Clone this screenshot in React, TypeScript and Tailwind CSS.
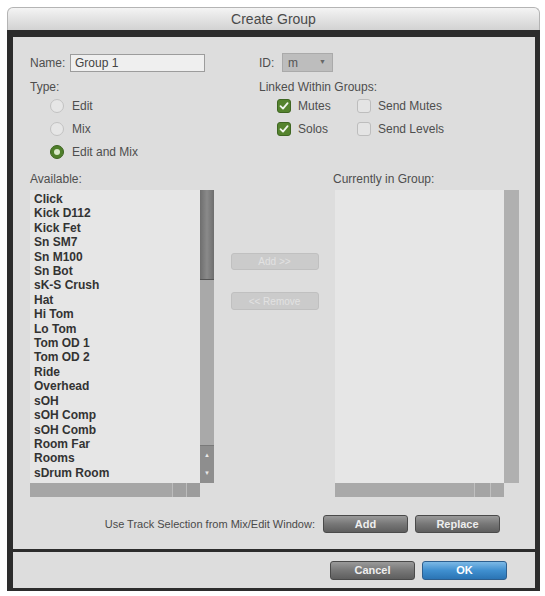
import React from "react";

const items = [
  "Click",
  "Kick D112",
  "Kick Fet",
  "Sn SM7",
  "Sn M100",
  "Sn Bot",
  "sK-S Crush",
  "Hat",
  "Hi Tom",
  "Lo Tom",
  "Tom OD 1",
  "Tom OD 2",
  "Ride",
  "Overhead",
  "sOH",
  "sOH Comp",
  "sOH Comb",
  "Room Far",
  "Rooms",
  "sDrum Room",
];

function Radio({ on, label }: { on?: boolean; label: string }) {
  return (
    <div className="flex items-center h-[23px] pl-[20px]">
      {on ? (
        <div className="w-[14px] h-[14px] rounded-full bg-[#4f7f2a] border border-[#3d6420] flex items-center justify-center">
          <div className="w-[6px] h-[6px] rounded-full bg-[#d8e8c8]" />
        </div>
      ) : (
        <div className="w-[14px] h-[14px] rounded-full bg-[#e6e6e6] border border-[#c2c2c2]" />
      )}
      <span className="ml-[8px] text-[12px] text-[#4e4e4e]">{label}</span>
    </div>
  );
}

function Check({ on, label }: { on?: boolean; label: string }) {
  return (
    <div className="flex items-center">
      {on ? (
        <div className="w-[14px] h-[14px] rounded-[3px] bg-[#55832e] border border-[#3f6622] flex items-center justify-center">
          <svg width="10" height="10" viewBox="0 0 10 10">
            <path d="M1.5 5.2 L4 7.6 L8.6 2.2" stroke="#f2f6ee" strokeWidth="1.8" fill="none" strokeLinecap="round" strokeLinejoin="round" />
          </svg>
        </div>
      ) : (
        <div className="w-[14px] h-[14px] rounded-[3px] bg-[#e4e4e4] border border-[#bdbdbd]" />
      )}
      <span className="ml-[7px] text-[12px] text-[#4e4e4e]">{label}</span>
    </div>
  );
}

function GrayButton({ label, w, h }: { label: string; w: string; h: string }) {
  return (
    <div
      className={`${w} ${h} rounded-[3px] border border-[#4a4a4a] bg-gradient-to-b from-[#9a9a9a] via-[#777777] to-[#5e5e5e] flex items-center justify-center text-[11px] font-bold text-[#eeeeee]`}
    >
      {label}
    </div>
  );
}

export default function App() {
  return (
    <div
      className="w-[545px] h-[596px] bg-white pt-[7px] pl-[7px] overflow-hidden"
      style={{ fontFamily: '"Liberation Sans", Arial, sans-serif' }}
    >
      <div className="w-[533px]">
        {/* Title bar */}
        <div className="h-[23px] rounded-t-[6px] border border-[#b4b4b4] border-b-0 bg-gradient-to-b from-[#f4f4f4] to-[#d2d2d2] flex items-center justify-center">
          <span className="text-[14px] text-[#4a4a4a]">Create Group</span>
        </div>
        {/* Dark body */}
        <div className="bg-[#2c2c2c] pl-[6px] pr-[5px] pt-[7px] pb-[3px] flex flex-col gap-[3px]">
          {/* Main panel */}
          <div className="h-[512px] bg-[#dddddd] pl-[17px] pt-[16px] text-[#4e4e4e]">
            <div className="flex">
              {/* Left column */}
              <div className="w-[229px] flex flex-col">
                <div className="flex items-center h-[19px]">
                  <span className="w-[40px] text-[12px]">Name:</span>
                  <div className="w-[135px] h-[18px] bg-[#efefef] border border-[#9c9c9c] flex items-center pl-[4px] text-[12px] text-[#444]">
                    Group 1
                  </div>
                </div>
                <div className="mt-[8px] h-[14px] flex items-center text-[12px]">Type:</div>
                <Radio label="Edit" />
                <Radio label="Mix" />
                <Radio on label="Edit and Mix" />
              </div>
              {/* Right column */}
              <div className="flex flex-col">
                <div className="flex items-center h-[19px]">
                  <span className="w-[23px] text-[12px]">ID:</span>
                  <div className="w-[51px] h-[19px] bg-[#bdbdbd] border border-[#aaaaaa] flex items-center justify-between pl-[5px] pr-[6px] text-[12px] text-[#555]">
                    <span>m</span>
                    <span className="text-[7px] text-[#666]">▼</span>
                  </div>
                </div>
                <div className="mt-[8px] h-[14px] flex items-center text-[12px]">Linked Within Groups:</div>
                <div className="pl-[18px] grid grid-cols-[80px_auto]">
                  <div className="h-[23px] flex items-center"><Check on label="Mutes" /></div>
                  <div className="h-[23px] flex items-center"><Check label="Send Mutes" /></div>
                  <div className="h-[23px] flex items-center"><Check on label="Solos" /></div>
                  <div className="h-[23px] flex items-center"><Check label="Send Levels" /></div>
                </div>
              </div>
            </div>

            {/* List labels */}
            <div className="flex mt-[9px] h-[14px] items-center text-[12px]">
              <span className="w-[303px]">Available:</span>
              <span>Currently in Group:</span>
            </div>

            {/* Lists */}
            <div className="flex mt-[4px] h-[307px]">
              {/* Available list */}
              <div className="w-[184px] flex flex-col">
                <div className="flex h-[293px]">
                  <div className="flex-1 bg-[#e6e6e6] pl-[4px] pt-[2px] overflow-hidden">
                    {items.map((it) => (
                      <div key={it} className="text-[12px] font-bold leading-[14.4px] text-[#333333]">
                        {it}
                      </div>
                    ))}
                  </div>
                  <div className="w-[14px] flex flex-col">
                    <div className="h-[90px] bg-gradient-to-r from-[#6e6e6e] via-[#8a8a8a] to-[#6e6e6e] border-b border-[#555]" />
                    <div className="flex-1 bg-[#a9a9a9]" />
                    <div className="h-[38px] bg-[#8e8e8e] border-t border-[#7a7a7a] flex flex-col items-center justify-around text-[6px] text-[#e8e8e8]">
                      <span>▲</span>
                      <span>▼</span>
                    </div>
                  </div>
                </div>
                <div className="flex h-[14px]">
                  <div className="w-[170px] bg-[#a6a6a6] flex justify-end">
                    <div className="w-[14px] border-l border-[#bcbcbc] bg-[#a0a0a0]" />
                    <div className="w-[14px] border-l border-[#bcbcbc] bg-[#9c9c9c]" />
                  </div>
                </div>
              </div>

              {/* Middle buttons */}
              <div className="w-[121px] flex flex-col items-center pt-[63px] gap-[22px]">
                <div className="w-[88px] h-[17px] rounded-[3px] bg-[#cbcbcb] border border-[#c0c0c0] flex items-center justify-center text-[10px] text-[#e2e2e2]">
                  Add &gt;&gt;
                </div>
                <div className="w-[88px] h-[18px] rounded-[3px] bg-[#cbcbcb] border border-[#c0c0c0] flex items-center justify-center text-[10px] text-[#e2e2e2]">
                  &lt;&lt; Remove
                </div>
              </div>

              {/* Current list */}
              <div className="w-[184px] flex flex-col">
                <div className="flex h-[293px]">
                  <div className="flex-1 bg-[#e6e6e6]" />
                  <div className="w-[15px] bg-[#b0b0b0]" />
                </div>
                <div className="flex h-[14px]">
                  <div className="w-[169px] bg-[#a9a9a9] flex justify-end">
                    <div className="w-[16px] border-l border-[#c0c0c0] bg-[#a4a4a4]" />
                    <div className="w-[14px] border-l border-[#c0c0c0] bg-[#a8a8a8]" />
                  </div>
                </div>
              </div>
            </div>

            {/* Track selection row */}
            <div className="flex justify-end items-center mt-[18px] pr-[35px] h-[18px]">
              <span className="text-[11px] text-[#4a4a4a] mr-[8px]">Use Track Selection from Mix/Edit Window:</span>
              <GrayButton label="Add" w="w-[85px]" h="h-[18px]" />
              <div className="w-[7px]" />
              <GrayButton label="Replace" w="w-[85px]" h="h-[18px]" />
            </div>
          </div>

          {/* Bottom area */}
          <div className="h-[36px] bg-[#dddddd] flex justify-end items-center pr-[28px] gap-[7px]">
            <GrayButton label="Cancel" w="w-[85px]" h="h-[19px]" />
            <div className="w-[85px] h-[19px] rounded-[3px] border border-[#2d5f8f] bg-gradient-to-b from-[#7cb9e6] via-[#3f8fcf] to-[#2a74b4] flex items-center justify-center text-[11px] font-bold text-white">
              OK
            </div>
          </div>
        </div>
      </div>
    </div>
  );
}
